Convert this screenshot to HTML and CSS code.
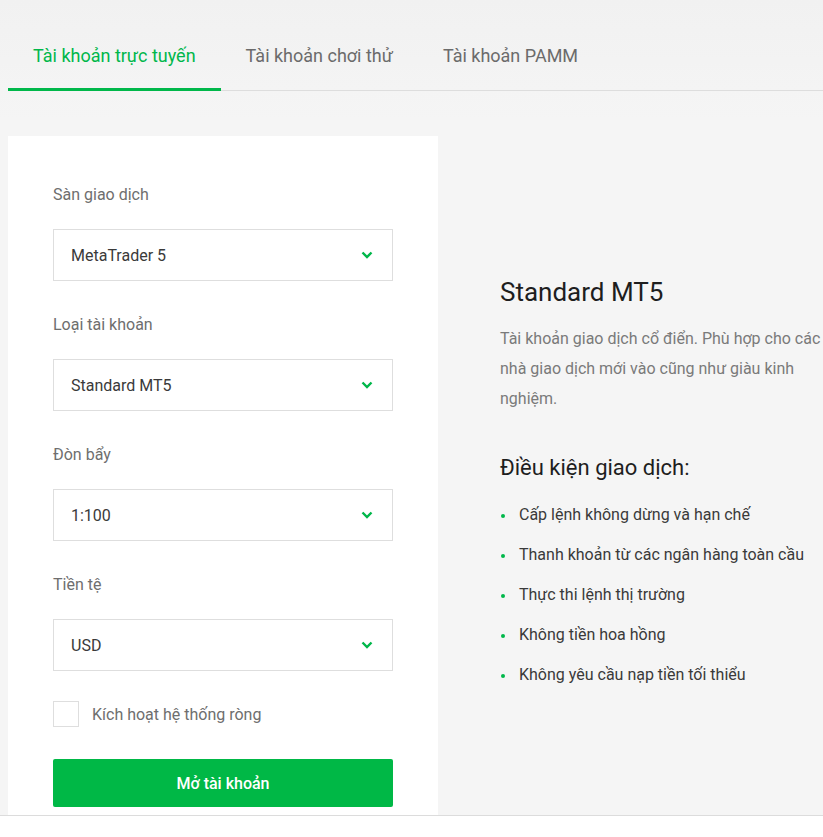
FILE: index.html
```html
<!DOCTYPE html>
<html lang="vi">
<head>
<meta charset="utf-8">
<link rel="stylesheet" href="styles.css">
</head>
<body>
<div class="page">
  <nav class="tabs">
    <div class="tab active">Tài khoản trực tuyến</div>
    <div class="tab">Tài khoản chơi thử</div>
    <div class="tab">Tài khoản PAMM</div>
  </nav>
  <div class="content">
    <form class="card">
      <div class="field">
        <div class="label">Sàn giao dịch</div>
        <div class="select"><span>MetaTrader 5</span><svg class="chev" width="12" height="8" viewBox="0 0 12 8"><path d="M1.5 1.5 L6 6 L10.5 1.5" fill="none" stroke="#00b74a" stroke-width="2.4"/></svg></div>
      </div>
      <div class="field">
        <div class="label">Loại tài khoản</div>
        <div class="select"><span>Standard MT5</span><svg class="chev" width="12" height="8" viewBox="0 0 12 8"><path d="M1.5 1.5 L6 6 L10.5 1.5" fill="none" stroke="#00b74a" stroke-width="2.4"/></svg></div>
      </div>
      <div class="field">
        <div class="label">Đòn bẩy</div>
        <div class="select"><span>1:100</span><svg class="chev" width="12" height="8" viewBox="0 0 12 8"><path d="M1.5 1.5 L6 6 L10.5 1.5" fill="none" stroke="#00b74a" stroke-width="2.4"/></svg></div>
      </div>
      <div class="field">
        <div class="label">Tiền tệ</div>
        <div class="select"><span>USD</span><svg class="chev" width="12" height="8" viewBox="0 0 12 8"><path d="M1.5 1.5 L6 6 L10.5 1.5" fill="none" stroke="#00b74a" stroke-width="2.4"/></svg></div>
      </div>
      <label class="check"><span class="box"></span><span>Kích hoạt hệ thống ròng</span></label>
      <div class="btn">Mở tài khoản</div>
    </form>
    <section class="info">
      <h2 class="title">Standard MT5</h2>
      <p class="desc">Tài khoản giao dịch cổ điển. Phù hợp cho các nhà giao dịch mới vào cũng như giàu kinh nghiệm.</p>
      <h3 class="sub">Điều kiện giao dịch:</h3>
      <ul class="list">
        <li>Cấp lệnh không dừng và hạn chế</li>
        <li>Thanh khoản từ các ngân hàng toàn cầu</li>
        <li>Thực thi lệnh thị trường</li>
        <li>Không tiền hoa hồng</li>
        <li>Không yêu cầu nạp tiền tối thiểu</li>
      </ul>
    </section>
  </div>
</div>
</body>
</html>
```

FILE: styles.css
```css
html, body {
  margin: 0;
  padding: 0;
  background: #fff;
  font-family: Roboto, "Noto Sans", Arial, sans-serif;
}
.page {
  background: linear-gradient(#f1f1f1 0, #f5f5f5 120px, #f5f5f5 100%);
  padding-left: 8px;
  height: 815px;
  border-bottom: 1px solid #dcdcdc;
  overflow: hidden;
}
.tabs {
  display: flex;
  border-bottom: 1px solid #dddddd;
  padding-top: 22px;
}
.tab {
  font-size: 18px;
  line-height: 24px;
  padding: 22px 25px 20px;
  color: #6b6b6b;
  border-bottom: 3px solid transparent;
  margin-bottom: -1px;
}
.tab.active {
  color: #00b74a;
  border-bottom-color: #00b74a;
}
.content {
  display: flex;
  margin-top: 45px;
}
.card {
  flex: 0 0 430px;
  width: 430px;
  box-sizing: border-box;
  background: #fff;
  padding: 46px 45px 40px;
  margin: 0;
  display: flex;
  flex-direction: column;
}
.field {
  margin-bottom: 31px;
}
.label {
  font-size: 16px;
  line-height: 24px;
  padding-top: 1px;
  color: #6e6e6e;
  margin-bottom: 22px;
}
.select {
  height: 52px;
  box-sizing: border-box;
  border: 1px solid #dedede;
  display: flex;
  align-items: center;
  justify-content: space-between;
  padding: 0 19px 0 17px;
  font-size: 16px;
  color: #3a3a3a;
}
.chev {
  display: block;
}
.check {
  display: flex;
  align-items: center;
  gap: 13px;
  font-size: 16px;
  color: #6e6e6e;
  margin-top: -1px;
}
.box {
  width: 26px;
  height: 26px;
  box-sizing: border-box;
  border: 1px solid #dedede;
  background: #fff;
}
.btn {
  margin-top: 32px;
  height: 48px;
  background: #00b846;
  border-radius: 2px;
  color: #fff;
  font-size: 16px;
  font-weight: 500;
  display: flex;
  align-items: center;
  justify-content: center;
}
.info {
  flex: 1 1 auto;
  min-width: 0;
  padding: 141px 0 0 62px;
  background: #f5f5f5;
}
.title {
  margin: 0;
  font-size: 26px;
  line-height: 30px;
  font-weight: 400;
  color: #1e1e1e;
}
.desc {
  margin: 17px 0 0;
  width: 330px;
  font-size: 16px;
  line-height: 30px;
  color: #7a7a7a;
}
.sub {
  margin: 39px 0 0;
  font-size: 22px;
  line-height: 30px;
  font-weight: 400;
  color: #1e1e1e;
}
.list {
  list-style: none;
  margin: 12px 0 0;
  padding: 0;
}
.list li {
  position: relative;
  font-size: 16px;
  line-height: 40px;
  color: #3a3a3a;
  padding-left: 19px;
}
.list li::before {
  content: "";
  position: absolute;
  left: 1px;
  top: 19px;
  width: 4px;
  height: 4px;
  border-radius: 50%;
  background: #00b74a;
}
```
